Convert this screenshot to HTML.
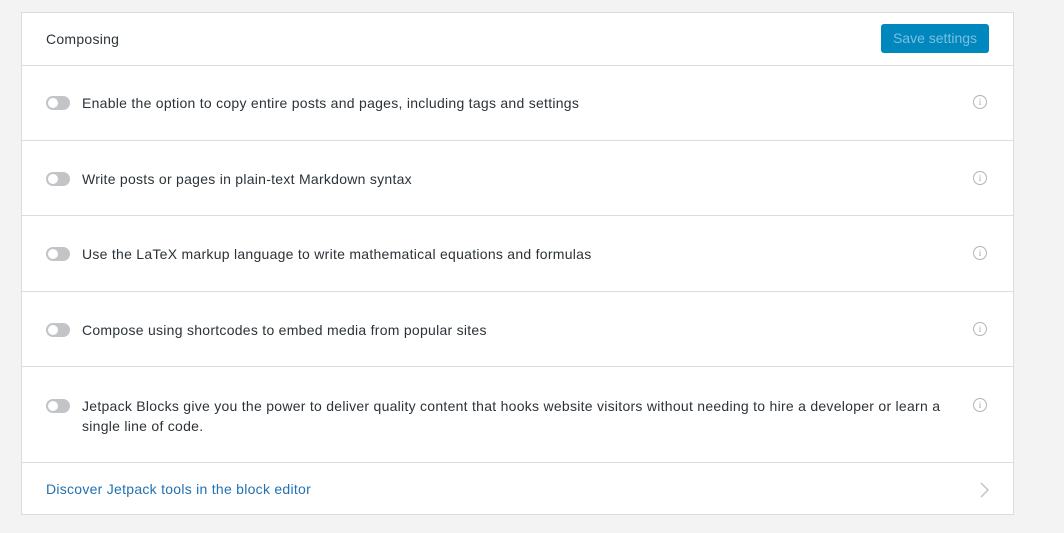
<!DOCTYPE html>
<html><head><style>
body{margin:0;width:1064px;height:533px;background:#f3f3f3;font-family:"Liberation Sans",sans-serif;position:relative;overflow:hidden}
.card{position:absolute;left:21px;top:12px;width:991px;height:501px;background:#fff;border:1px solid #dcdcde}
.row{position:absolute;left:0;width:991px;border-bottom:1px solid #dcdcde}
.t{position:absolute;left:60px;font-size:14px;color:#2c3338;line-height:20px;letter-spacing:0.27px}
.tg{position:absolute;left:24px;width:22px;height:12px;border-radius:7px;background:#c3c4c7;border:1px solid #c3c4c7}
.tg:after{content:"";position:absolute;left:1px;top:1px;width:10px;height:10px;border-radius:50%;background:#fff}
.i{position:absolute;left:951px;width:12px;height:12px;border:1px solid #b4b4b4;border-radius:50%;font-size:9px;color:#aaa;text-align:center;line-height:12px;font-family:"Liberation Serif",serif}
</style></head><body>
<div class="card">
<div class="row" style="top:0;height:52px"><div class="t" style="left:24px;top:16px">Composing</div>
<div style="position:absolute;left:859px;top:11px;width:108px;height:29px;background:#0087be;border-radius:3px;color:#79c0de;font-size:14px;text-align:center;line-height:29px">Save settings</div></div>
<div class="row" style="top:53px;height:74px"><div class="tg" style="top:30px"></div><div class="t" style="top:27px">Enable the option to copy entire posts and pages, including tags and settings</div><div class="i" style="top:29px">i</div></div>
<div class="row" style="top:128px;height:74px"><div class="tg" style="top:31px"></div><div class="t" style="top:28px">Write posts or pages in plain-text Markdown syntax</div><div class="i" style="top:30px">i</div></div>
<div class="row" style="top:203px;height:75px"><div class="tg" style="top:31px"></div><div class="t" style="top:28px">Use the LaTeX markup language to write mathematical equations and formulas</div><div class="i" style="top:30px">i</div></div>
<div class="row" style="top:279px;height:74px"><div class="tg" style="top:31px"></div><div class="t" style="top:28px">Compose using shortcodes to embed media from popular sites</div><div class="i" style="top:30px">i</div></div>
<div class="row" style="top:354px;height:95px"><div class="tg" style="top:32px"></div><div class="t" style="top:29px;width:868px">Jetpack Blocks give you the power to deliver quality content that hooks website visitors without needing to hire a developer or learn a single line of code.</div><div class="i" style="top:31px">i</div></div>
<div class="t" style="left:24px;top:466px;color:#2271b1">Discover Jetpack tools in the block editor</div>
<svg style="position:absolute;left:956px;top:468px" width="12" height="18"><path d="M3 2l7 7-7 7" fill="none" stroke="#c3c4c7" stroke-width="1.5"/></svg>
</div>
</body></html>
